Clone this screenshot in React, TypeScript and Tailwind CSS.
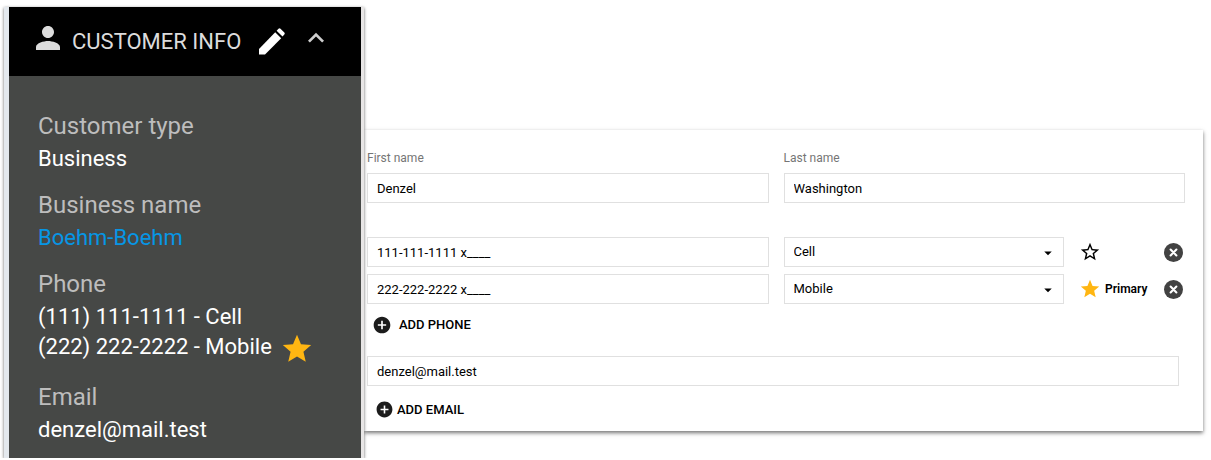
import { useState } from "react";
import type { ReactNode } from "react";
import {
  MdAddCircle,
  MdArrowDropDown,
  MdExpandLess,
  MdPerson,
  MdStar,
  MdStarBorder,
} from "react-icons/md";

const inputClass =
  "block h-[30px] w-full min-w-0 border border-[#e0e0e0] bg-white px-[9px] text-[13px] text-black outline-none focus:border-gray-400";

function PencilIcon() {
  return (
    <svg viewBox="0 0 26 27" fill="currentColor" className="h-[27px] w-[26px]">
      <path d="M0 26.5V21L16.2 4.2l6 6L6 26.5z" />
      <path d="M17.6 2.7 19.5.8q1-.9 2 0l3.8 3.8q.9 1 0 2l-1.8 1.9z" />
    </svg>
  );
}

function RemoveIcon() {
  return (
    <svg viewBox="0 0 23 23" className="size-[23px]">
      <circle cx="11.5" cy="11.5" r="9.5" fill="currentColor" />
      <path
        d="m8.6 8.6 5.8 5.8m0-5.8-5.8 5.8"
        stroke="#fff"
        strokeWidth="2.1"
        strokeLinecap="round"
      />
    </svg>
  );
}

function InfoItem({ label, children }: { label: string; children: ReactNode }) {
  return (
    <div>
      <dt className="leading-8 text-[#bdbdbd]">{label}</dt>
      <dd className="mt-0.5 text-[22px] leading-[30px] text-white">{children}</dd>
    </div>
  );
}

function CustomerInfo() {
  return (
    <aside className="relative z-10 ml-1 w-[360px] shrink-0 border-r-[3px] border-l-[5px] border-r-[#e8e6e6] border-l-[#e4e9ee] bg-[#464846] shadow-[0_1px_3px_rgba(0,0,0,0.6)]">
      <header className="flex h-[69px] items-center bg-black pl-[21px] text-[#dcdcdc]">
        <MdPerson className="mb-2 size-9" />
        <h2 className="ml-1.5 text-[22px]">CUSTOMER INFO</h2>
        <button type="button" aria-label="Edit customer" className="ml-[18px] text-white">
          <PencilIcon />
        </button>
        <button type="button" aria-label="Collapse" className="mb-2 ml-[15px] text-[#cfcfcf]">
          <MdExpandLess className="size-8" />
        </button>
      </header>
      <dl className="flex flex-col gap-[15px] px-[29px] pt-[34px] pb-[13px] text-2xl">
        <InfoItem label="Customer type">Business</InfoItem>
        <InfoItem label="Business name">
          <a href="#" className="text-[#0696e5]">
            Boehm-Boehm
          </a>
        </InfoItem>
        <InfoItem label="Phone">
          <p>(111) 111-1111 - Cell</p>
          <p className="flex items-start">
            (222) 222-2222 - Mobile
            <MdStar className="ml-2 size-[34px] text-[#ffb612]" />
          </p>
        </InfoItem>
        <InfoItem label="Email">denzel@mail.test</InfoItem>
      </dl>
    </aside>
  );
}

type Phone = { number: string; type: string; primary: boolean };

function PhoneRow({ phone }: { phone: Phone }) {
  return (
    <div className="grid grid-cols-2 gap-[15px]">
      <input aria-label="Phone number" defaultValue={phone.number} className={inputClass} />
      <div className="flex items-center">
        <div className="relative min-w-0 flex-1">
          <select
            aria-label="Phone type"
            defaultValue={phone.type}
            className={`${inputClass} appearance-none`}
          >
            <option>Cell</option>
            <option>Mobile</option>
          </select>
          <MdArrowDropDown className="pointer-events-none absolute top-[7px] right-[7px] size-[18px]" />
        </div>
        <div className="flex w-[121px] items-center pl-[15px]">
          <button
            type="button"
            aria-label={phone.primary ? "Primary phone" : "Make primary"}
            className="flex items-center gap-1 text-xs font-semibold"
          >
            {phone.primary ? (
              <>
                <MdStar className="size-[22px] text-[#ffb612]" />
                Primary
              </>
            ) : (
              <MdStarBorder className="size-[22px]" />
            )}
          </button>
          <button type="button" aria-label="Remove phone" className="ml-auto text-[#424242]">
            <RemoveIcon />
          </button>
        </div>
      </div>
    </div>
  );
}

function CustomerForm() {
  const [phones, setPhones] = useState<Phone[]>([
    { number: "111-111-1111 x____", type: "Cell", primary: false },
    { number: "222-222-2222 x____", type: "Mobile", primary: true },
  ]);
  const addPhone = () => setPhones([...phones, { number: "", type: "Cell", primary: false }]);

  return (
    <form className="mt-[123px] mr-2 min-w-0 flex-1 bg-white pt-5 pr-[18px] pb-[11px] pl-[3px] shadow-[0_2px_4px_rgba(0,0,0,0.55)]">
      <div className="grid grid-cols-2 gap-[15px]">
        <label className="text-xs text-[#757575]">
          <span className="mb-[7px] block">First name</span>
          <input defaultValue="Denzel" className={inputClass} />
        </label>
        <label className="text-xs text-[#757575]">
          <span className="mb-[7px] block">Last name</span>
          <input defaultValue="Washington" className={inputClass} />
        </label>
      </div>
      <div className="mt-[34px] flex flex-col gap-[7px]">
        {phones.map((phone, i) => (
          <PhoneRow key={i} phone={phone} />
        ))}
      </div>
      <button
        type="button"
        onClick={addPhone}
        className="mt-[11px] ml-[5px] flex items-center gap-[7px] text-[13px] font-medium"
      >
        <MdAddCircle className="size-5 text-[#1c1c1c]" />
        ADD PHONE
      </button>
      <div className="mt-[21px] mr-1.5">
        <input type="email" aria-label="Email" defaultValue="denzel@mail.test" className={inputClass} />
      </div>
      <button
        type="button"
        className="mt-3.5 ml-2 flex items-center gap-[3px] text-[13px] font-medium"
      >
        <MdAddCircle className="size-[19px] text-[#1c1c1c]" />
        ADD EMAIL
      </button>
    </form>
  );
}

export default function App() {
  return (
    <main className="flex items-start bg-white pt-[7px] font-[Roboto,sans-serif] text-black">
      <CustomerInfo />
      <CustomerForm />
    </main>
  );
}
